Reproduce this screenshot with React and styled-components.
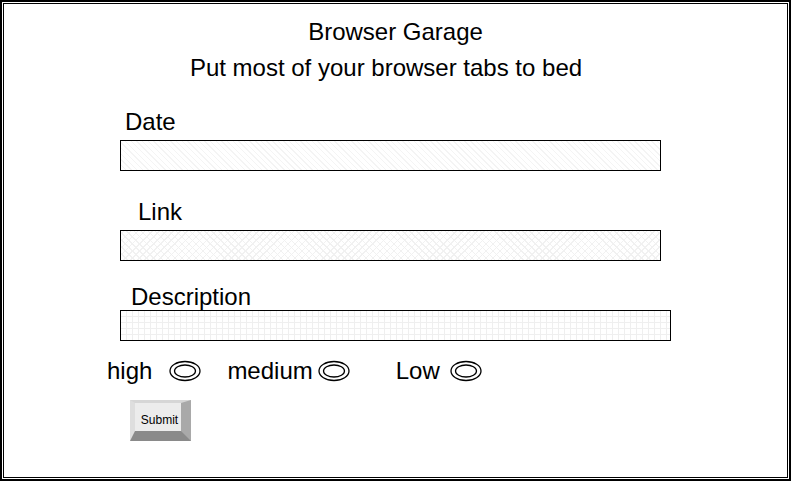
// App.jsx
import React from "react";
import styled, { createGlobalStyle } from "styled-components";

const GlobalStyle = createGlobalStyle`
  html, body {
    margin: 0;
    padding: 0;
    background: #fff;
  }
  body {
    font-family: "Liberation Sans", Arial, sans-serif;
    color: #000;
  }
`;

// outer frame: thick line, thin gap, thin line
const Frame = styled.div`
  width: 791px;
  height: 481px;
  box-sizing: border-box;
  border: 2px solid #000;
  padding: 1px;
`;

const Inner = styled.div`
  height: 100%;
  box-sizing: border-box;
  border: 1px solid #000;
  padding-top: 14px;
`;

const Title = styled.h1`
  margin: 0;
  font-size: 24px;
  font-weight: 400;
  line-height: 28px;
  text-align: center;
`;

const Subtitle = styled.h2`
  margin: 8px 19px 0 0;
  font-size: 24px;
  font-weight: 400;
  line-height: 28px;
  text-align: center;
`;

const Form = styled.form`
  display: flex;
  flex-direction: column;
  padding-left: 116px;
`;

const Field = styled.div`
  display: flex;
  flex-direction: column;
  margin-top: ${(p) => p.$top}px;
`;

const Label = styled.label`
  font-size: 24px;
  line-height: 28px;
  padding-left: ${(p) => p.$indent}px;
  margin-bottom: ${(p) => p.$gap}px;
`;

const patterns = {
  stripes: `repeating-linear-gradient(45deg, #fff 0 3px, #f4f4f4 3px 4px)`,
  hatch: `repeating-linear-gradient(45deg, transparent 0 4px, #f1f1f1 4px 5px),
    repeating-linear-gradient(-45deg, #fff 0 4px, #f1f1f1 4px 5px)`,
  grid: `repeating-linear-gradient(0deg, transparent 0 5px, #efefef 5px 6px),
    repeating-linear-gradient(90deg, #fff 0 5px, #efefef 5px 6px)`,
};

const TextInput = styled.input`
  box-sizing: border-box;
  width: ${(p) => p.$width}px;
  height: 31px;
  border: 1px solid #000;
  border-radius: 0;
  padding: 0 6px;
  font: 16px "Liberation Sans", Arial, sans-serif;
  background: ${(p) => patterns[p.$pattern]};
  outline: none;
`;

const RadioRow = styled.div`
  display: flex;
  align-items: center;
  margin-top: 16px;
  margin-left: -13px;
`;

const RadioOption = styled.label`
  display: flex;
  align-items: center;
  gap: ${(p) => p.$gap}px;
  margin-right: ${(p) => p.$after}px;
  font-size: 24px;
  line-height: 28px;
`;

const OvalSvg = styled.svg`
  display: block;
  flex: none;
`;

function Oval() {
  return (
    <OvalSvg width="32" height="22" viewBox="0 0 32 22">
      <ellipse cx="16" cy="11" rx="15" ry="9.5" fill="none" stroke="#000" strokeWidth="1.3" />
      <ellipse cx="16" cy="11" rx="10.5" ry="6" fill="none" stroke="#000" strokeWidth="1.3" />
    </OvalSvg>
  );
}

const SubmitButton = styled.button`
  align-self: flex-start;
  margin: 15px 0 0 10px;
  box-sizing: border-box;
  width: 61px;
  height: 41px;
  padding: 5px 0 0 3px;
  background: #ececec;
  border-style: solid;
  border-width: 3px 10px 10px 5px;
  border-color: #d6d6d6 #a9a9a9 #8a8a8a #dedede;
  font: 12px "Liberation Sans", Arial, sans-serif;
  color: #000;
`;

export default function App() {
  return (
    <>
      <GlobalStyle />
      <Frame>
        <Inner>
          <Title>Browser Garage</Title>
          <Subtitle>Put most of your browser tabs to bed</Subtitle>
          <Form onSubmit={(e) => e.preventDefault()}>
            <Field $top={26}>
              <Label $indent={5} $gap={4}>Date</Label>
              <TextInput $width={541} $pattern="stripes" />
            </Field>
            <Field $top={27}>
              <Label $indent={18} $gap={4}>Link</Label>
              <TextInput $width={541} $pattern="hatch" />
            </Field>
            <Field $top={22}>
              <Label $indent={11} $gap={-1}>Description</Label>
              <TextInput $width={551} $pattern="grid" />
            </Field>
            <RadioRow>
              <RadioOption $gap={17} $after={26}>high <Oval /></RadioOption>
              <RadioOption $gap={5} $after={46}>medium <Oval /></RadioOption>
              <RadioOption $gap={10} $after={0}>Low <Oval /></RadioOption>
            </RadioRow>
            <SubmitButton type="submit">Submit</SubmitButton>
          </Form>
        </Inner>
      </Frame>
    </>
  );
}
